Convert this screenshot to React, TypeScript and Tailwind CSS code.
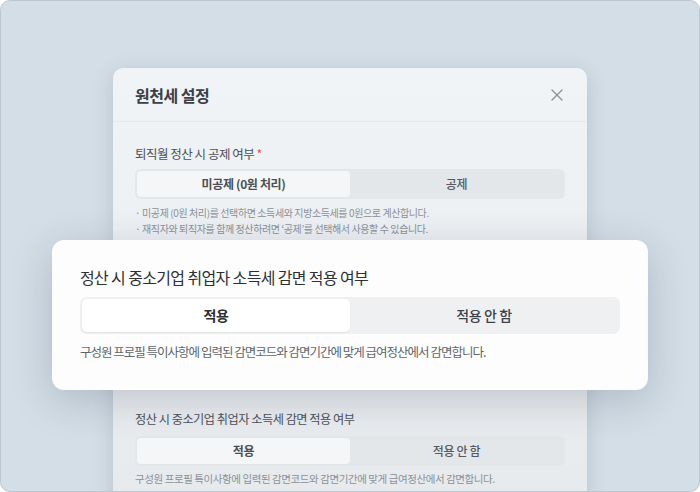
import React from 'react';

const font = { fontFamily: '"Noto Sans CJK KR", "Noto Sans", sans-serif' };

type SegProps = {
  left: string;
  right: string;
  size: 'sm' | 'lg';
};

const Segmented: React.FC<SegProps> = ({ left, right, size }) => {
  const big = size === 'lg';
  return (
    <div
      className={
        big
          ? 'flex h-[37px] rounded-[7px] bg-[#eff0f2] p-[2px]'
          : 'flex h-[30px] rounded-[6px] bg-[#e4e7ea] p-[2px]'
      }
    >
      <div
        className={
          big
            ? 'flex flex-1 items-center justify-center rounded-[5px] bg-white text-[14px] font-bold tracking-[-0.03em] text-[#2a2e33] shadow-[0_1px_2px_rgba(0,0,0,0.06)]'
            : 'flex flex-1 items-center justify-center rounded-[4px] bg-[#f4f6f8] text-[12px] font-semibold tracking-[-0.03em] text-[#4a4f55]'
        }
      >
        {left}
      </div>
      <div
        className={
          big
            ? 'flex flex-1 items-center justify-center text-[14px] font-medium tracking-[-0.03em] text-[#3d4248]'
            : 'flex flex-1 items-center justify-center text-[12px] font-medium tracking-[-0.03em] text-[#555a60]'
        }
      >
        {right}
      </div>
    </div>
  );
};

export default function App() {
  return (
    <div style={font} className="relative h-[492px] w-[700px] overflow-hidden rounded-[10px] border border-[#bcc8d1] bg-[#d3dee6]">
      {/* dimmed modal behind */}
      <div className="ml-[112px] mt-[67px] h-[440px] w-[474px] rounded-t-[10px] bg-gradient-to-b from-[#f1f4f7] to-[#e7eaed] shadow-[0_4px_20px_rgba(60,80,100,0.18)]">
        <div className="flex h-[54px] items-center justify-between border-b border-[#e6eaee] pl-[22px] pr-[24px]">
          <span className="text-[16px] font-bold tracking-[-0.03em] text-[#3b4046]">원천세 설정</span>
          <svg width="12" height="12" viewBox="0 0 12 12" fill="none" stroke="#8d9299" strokeWidth="1.4" strokeLinecap="round">
            <path d="M1 1L11 11M11 1L1 11" />
          </svg>
        </div>

        <div className="px-[22px] pt-[23px]">
          <div className="text-[12.5px] leading-[18px] tracking-[-0.04em] text-[#4b5056]">
            퇴직월 정산 시 공제 여부 <span className="text-[#e2553f]">*</span>
          </div>
          <div className="mt-[6px]">
            <Segmented size="sm" left="미공제 (0원 처리)" right="공제" />
          </div>
          <div className="mt-[6px] text-[10px] leading-[16px] tracking-[-0.04em] text-[#8c9197]">
            <p>· 미공제 (0원 처리)를 선택하면 소득세와 지방소득세를 0원으로 계산합니다.</p>
            <p>· 재직자와 퇴직자를 함께 정산하려면 ‘공제’를 선택해서 사용할 수 있습니다.</p>
          </div>

          <div className="h-[173px]" />

          <div className="text-[12.2px] leading-[18px] tracking-[-0.04em] text-[#4b5056]">
            정산 시 중소기업 취업자 소득세 감면 적용 여부
          </div>
          <div className="mt-[8px]">
            <Segmented size="sm" left="적용" right="적용 안 함" />
          </div>
          <div className="mt-[5px] text-[10.5px] leading-[16px] tracking-[-0.04em] text-[#8c9197]">
            구성원 프로필 특이사항에 입력된 감면코드와 감면기간에 맞게 급여정산에서 감면합니다.
          </div>
        </div>
      </div>

      {/* highlighted card */}
      <div className="absolute left-[51px] top-[239px] w-[596px] rounded-[12px] bg-[#fdfdfe] px-[28px] pb-[28px] pt-[26px] shadow-[0_10px_40px_rgba(40,60,80,0.22)]">
        <div className="text-[16px] leading-[22px] tracking-[-0.04em] text-[#2c3035]">
          정산 시 중소기업 취업자 소득세 감면 적용 여부
        </div>
        <div className="mt-[9px]">
          <Segmented size="lg" left="적용" right="적용 안 함" />
        </div>
        <div className="mt-[8px] text-[12.5px] leading-[20px] tracking-[-0.08em] text-[#60666c]">
          구성원 프로필 특이사항에 입력된 감면코드와 감면기간에 맞게 급여정산에서 감면합니다.
        </div>
      </div>
    </div>
  );
}
